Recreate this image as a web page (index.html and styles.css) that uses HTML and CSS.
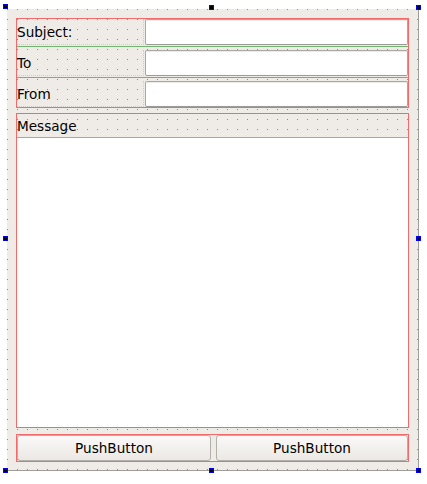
FILE: index.html
```html
<!DOCTYPE html>
<html>
<head>
<meta charset="utf-8">
<link rel="stylesheet" href="styles.css">
</head>
<body>
<div class="form">
  <div class="grid"></div>
  <div class="box box-fields">
    <div class="row">
      <div class="label">Subject:</div>
      <div class="edit"></div>
    </div>
    <div class="sep"></div>
    <div class="row">
      <div class="label">To</div>
      <div class="edit"></div>
    </div>
    <div class="sep"></div>
    <div class="row">
      <div class="label">From</div>
      <div class="edit"></div>
    </div>
  </div>
  <div class="box box-message">
    <div class="label label-msg">Message</div>
    <div class="textedit"></div>
  </div>
  <div class="box box-buttons">
    <div class="btn btn-first">PushButton</div>
    <div class="btn btn-second">PushButton</div>
  </div>
</div>
<div class="handle h-tl"></div>
<div class="handle h-tm"></div>
<div class="handle h-tr"></div>
<div class="handle h-ml"></div>
<div class="handle h-mr"></div>
<div class="handle h-bl"></div>
<div class="handle h-bm"></div>
<div class="handle h-br"></div>
</body>
</html>
```

FILE: styles.css
```css
html, body {
  margin: 0;
  padding: 0;
  background: #ffffff;
}
body {
  width: 427px;
  height: 484px;
  position: relative;
  overflow: hidden;
  font-family: "DejaVu Sans", sans-serif;
  font-size: 13.6px;
  color: #000;
}
.form {
  position: relative;
  margin: 9px 0 0 7px;
  width: 412px;
  height: 462px;
  box-sizing: border-box;
  background: #efebe7;
  border-right: 1px solid #a09d9a;
  border-bottom: 1px solid #a09d9a;
  padding: 9px 9px 8px 9px;
  display: flex;
  flex-direction: column;
}
.grid {
  position: absolute;
  left: 0;
  top: 0;
  right: -1px;
  bottom: -1px;
  background-image: linear-gradient(to right, #8c8a88 1px, transparent 1px);
  background-size: 10px 10px;
  -webkit-mask-image: linear-gradient(to bottom, #000 1px, transparent 1px);
  -webkit-mask-size: 10px 10px;
  mask-image: linear-gradient(to bottom, #000 1px, transparent 1px);
  mask-size: 10px 10px;
  pointer-events: none;
}
.box {
  position: relative;
  border: 1px solid #f36a6a;
}
.box-fields {
  height: 90px;
  box-sizing: border-box;
  display: flex;
  flex-direction: column;
}
.row {
  display: flex;
  height: 26px;
  gap: 1px;
}
.sep {
  height: 1px;
  margin: 1px 0 3px;
  background: #6fb56f;
}
.label {
  width: 127px;
  box-sizing: border-box;
  display: flex;
  align-items: center;
  white-space: nowrap;
  border-right: 1px dotted #cfcbc7;
  border-bottom: 1px dotted #cfcbc7;
}
.edit {
  flex: 1;
  box-sizing: border-box;
  background: #fff;
  border: 1px solid #aaa7a4;
  border-bottom-color: #9c9996;
  border-radius: 2px;
  box-shadow: inset 0 1px 0 #ecebea;
}
.box-message {
  margin-top: 5px;
  flex: 1;
  display: flex;
  flex-direction: column;
}
.label-msg {
  width: auto;
  height: 23px;
  border: none;
}
.textedit {
  flex: 1;
  background: #fff;
  border-top: 1px solid #a9a6a3;
}
.box-buttons {
  margin-top: 6px;
  height: 28px;
  box-sizing: border-box;
  display: flex;
  gap: 5px;
}
.btn {
  box-sizing: border-box;
  display: flex;
  align-items: center;
  justify-content: center;
  background: linear-gradient(to bottom, #faf9f8, #ebe8e4);
  border: 1px solid #b3afab;
  border-radius: 3px;
  white-space: nowrap;
}
.btn-first {
  width: 194px;
}
.btn-second {
  flex: 1;
}
.handle {
  position: absolute;
  width: 5px;
  height: 5px;
  box-sizing: border-box;
  background: #000;
  border: 1px solid #0000ff;
}
.h-tl { left: 3px; top: 4px; }
.h-tm { left: 209px; top: 5px; }
.h-tr { left: 416px; top: 5px; }
.h-ml { left: 3px; top: 236px; }
.h-mr { left: 416px; top: 236px; }
.h-bl { left: 3px; top: 468px; }
.h-bm { left: 209px; top: 468px; }
.h-br { left: 416px; top: 468px; }
```
